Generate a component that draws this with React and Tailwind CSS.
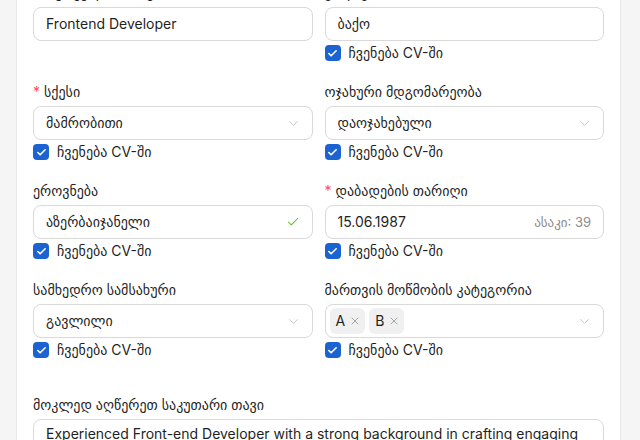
import React from 'react';
import { ChevronDown, Check, X } from 'lucide-react';

const font = { fontFamily: 'Inter, "DejaVu Sans", "Noto Sans", sans-serif' };

const ShowInCv = () => (
    <label className="mt-[2px] flex h-5 items-center gap-2 text-sm text-[#1f1f1f]">
        <span className="flex h-4 w-4 items-center justify-center rounded-[4px] bg-[#1c63d2]">
            <Check size={11} strokeWidth={3.5} className="text-white" />
        </span>
        <span>ჩვენება CV-ში</span>
    </label>
);

const Label = ({ children, required }) => (
    <div className="mb-1 h-5 text-sm leading-5 text-[#1f1f1f]">
        {required && <span className="mr-1 text-[#ff4d4f]">*</span>}
        {children}
    </div>
);

const Box = ({ children, className = '' }) => (
    <div className={`flex h-[34px] items-center rounded-lg border border-[#d9d9d9] bg-white text-sm text-[#1f1f1f] ${className}`}>
        {children}
    </div>
);

const Field = ({ label, required, value, right, cv = true }) => (
    <div className="flex flex-col">
        <Label required={required}>{label}</Label>
        <Box className="pl-3 pr-3">
            <span className="flex-1 truncate">{value}</span>
            {right}
        </Box>
        {cv && <ShowInCv />}
    </div>
);

const Chevron = () => <ChevronDown size={15} strokeWidth={1.5} className="mr-[-1px] text-[#bfbfbf]" />;

const Tag = ({ children }) => (
    <span className="flex h-[26px] items-center gap-1 rounded-md bg-[#f0f0f0] pl-[6px] pr-1 text-sm text-[#1f1f1f]">
        {children}
        <X size={12} strokeWidth={1.5} className="text-[#8c8c8c]" />
    </span>
);

export default function App() {
    return (
        <div className="h-[440px] overflow-hidden bg-[#f5f5f5]" style={font}>
            <div className="ml-4 mt-[-34px] w-[605px] border border-[#e8e8e8] bg-white px-4 pb-10 pt-4">
                <div className="grid grid-cols-2 gap-x-3 gap-y-[19px]">
                    <Field label="სასურველი პოზიცია" value="Frontend Developer" cv={false} />
                    <Field label="ქალაქი" value="ბაქო" />

                    <Field label="სქესი" required value="მამრობითი" right={<Chevron />} />
                    <Field label="ოჯახური მდგომარეობა" value="დაოჯახებული" right={<Chevron />} />

                    <Field label="ეროვნება" value="აზერბაიჯანელი" right={<Check size={14} strokeWidth={1.75} className="text-[#52c41a]" />} />
                    <Field label="დაბადების თარიღი" required value="15.06.1987" right={<span className="text-[13px] text-[#8c8c8c]">ასაკი: 39</span>} />

                    <Field label="სამხედრო სამსახური" value="გავლილი" right={<Chevron />} />
                    <div className="flex flex-col">
                        <Label>მართვის მოწმობის კატეგორია</Label>
                        <Box className="gap-1 pl-1 pr-3">
                            <Tag>A</Tag>
                            <Tag>B</Tag>
                            <span className="flex-1" />
                            <Chevron />
                        </Box>
                        <ShowInCv />
                    </div>
                </div>

                <div className="mt-[35px]">
                    <Label>მოკლედ აღწერეთ საკუთარი თავი</Label>
                    <div className="h-[120px] rounded-lg border border-[#d9d9d9] px-3 py-1 text-sm leading-5 text-[#1f1f1f]">
                        Experienced Front-end Developer with a strong background in crafting engaging and user-friendly web applications. Skilled in React, TypeScript and modern CSS.
                    </div>
                </div>
            </div>
        </div>
    );
}
